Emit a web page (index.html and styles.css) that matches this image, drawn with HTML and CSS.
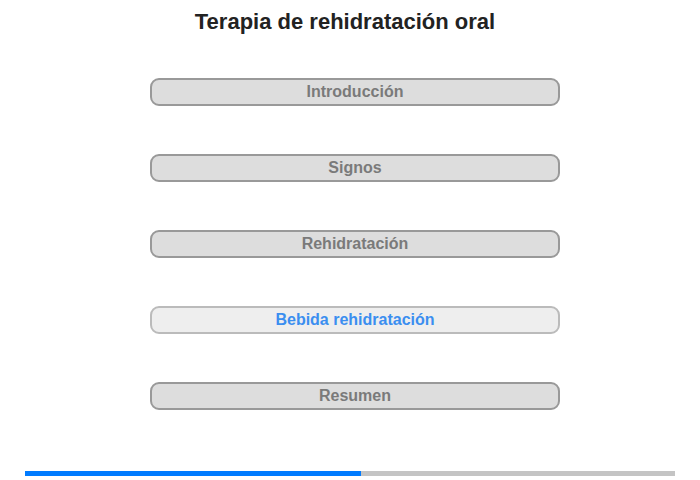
FILE: index.html
```html
<!DOCTYPE html>
<html lang="es">
<head>
<meta charset="utf-8">
<link rel="stylesheet" href="styles.css">
</head>
<body>
<div class="page">
  <h1 class="title">Terapia de rehidratación oral</h1>
  <nav class="menu">
    <div class="item">Introducción</div>
    <div class="item">Signos</div>
    <div class="item">Rehidratación</div>
    <div class="item active">Bebida rehidratación</div>
    <div class="item">Resumen</div>
  </nav>
  <div class="progress"><div class="fill" style="width:51.7%"></div></div>
</div>
</body>
</html>
```
FILE: styles.css
```css
html, body { margin: 0; padding: 0; background: #fff; }
body { font-family: "Liberation Sans", Arial, sans-serif; }
.page { width: 700px; height: 480px; display: flex; flex-direction: column; align-items: center; }
.title { margin: 9px 10px 0 0; font-size: 22px; line-height: 26px; font-weight: bold; color: #222; }
.menu { margin: 43px 0 0 10px; display: flex; flex-direction: column; gap: 48px; }
.item {
  box-sizing: border-box; width: 410px; height: 28px;
  border: 2px solid #999; border-radius: 9px; background: #ddd;
  color: #7a7a7a; font-size: 16px; font-weight: bold; text-align: center; line-height: 24px;
}
.item.active { background: #eee; border-color: #bbb; color: #3b8ef0; }
.progress { margin-top: 61px; width: 650px; height: 5px; background: #c4c4c4; display: flex; }
.fill { background: #007bff; height: 100%; }
```
